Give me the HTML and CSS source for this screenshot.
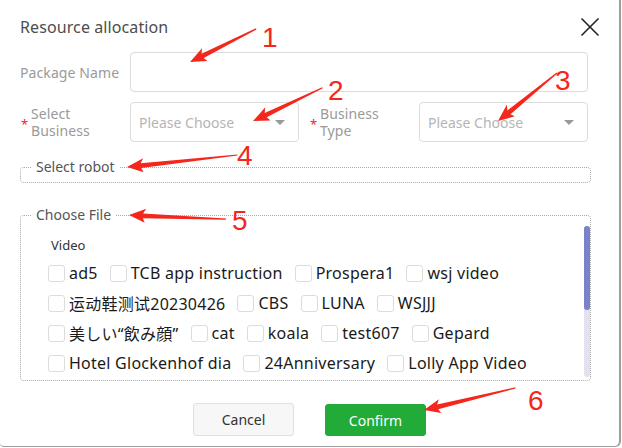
FILE: index.html
```html
<!DOCTYPE html>
<html lang="en">
<head>
  <meta charset="UTF-8" />
  <title>Resource allocation</title>
  <link rel="stylesheet" href="styles.css">
</head>
<body>
  <div class="dialog">
    <div class="dialog-header">
      <h2>Resource allocation</h2>
      <button class="close-btn" aria-label="close">
        <svg width="20" height="20" viewBox="0 0 20 20"><path d="M1.5 1.5 L18.5 18.5 M18.5 1.5 L1.5 18.5" stroke="#222" stroke-width="1.6" fill="none"/></svg>
      </button>
    </div>

    <div class="form-row">
      <label class="form-label">Package Name</label>
      <input class="text-input" type="text">
    </div>

    <div class="form-row">
      <label class="form-label required"><span>Select Business</span></label>
      <div class="select"><span>Please Choose</span><i class="caret"></i></div>
      <label class="form-label required second"><span>Business Type</span></label>
      <div class="select"><span>Please Choose</span><i class="caret"></i></div>
    </div>

    <fieldset class="robot-box">
      <legend>Select robot</legend>
    </fieldset>

    <fieldset class="file-box">
      <legend>Choose File</legend>
      <div class="file-list">
        <div class="file-group">
          <div class="group-title">Video</div>
          <div class="file-row">
            <label class="file-item"><input type="checkbox">ad5</label>
            <label class="file-item"><input type="checkbox">TCB app instruction</label>
            <label class="file-item"><input type="checkbox">Prospera1</label>
            <label class="file-item"><input type="checkbox">wsj video</label>
          </div>
          <div class="file-row">
            <label class="file-item"><input type="checkbox">运动鞋测试20230426</label>
            <label class="file-item"><input type="checkbox">CBS</label>
            <label class="file-item"><input type="checkbox">LUNA</label>
            <label class="file-item"><input type="checkbox">WSJJJ</label>
          </div>
          <div class="file-row">
            <label class="file-item"><input type="checkbox">美しい“飲み顔”</label>
            <label class="file-item"><input type="checkbox">cat</label>
            <label class="file-item"><input type="checkbox">koala</label>
            <label class="file-item"><input type="checkbox">test607</label>
            <label class="file-item"><input type="checkbox">Gepard</label>
          </div>
          <div class="file-row">
            <label class="file-item"><input type="checkbox">Hotel Glockenhof dia</label>
            <label class="file-item"><input type="checkbox">24Anniversary</label>
            <label class="file-item"><input type="checkbox">Lolly App Video</label>
          </div>
        </div>
        <div class="scrollbar"><div class="scrollbar-thumb"></div></div>
      </div>
    </fieldset>

    <div class="dialog-footer">
      <button class="btn btn-cancel">Cancel</button>
      <button class="btn btn-confirm">Confirm</button>
    </div>
  </div>

  <!-- annotation marks -->
  <svg class="marks" width="622" height="448" viewBox="0 0 622 448">
    <g fill="#f4271c">
      <polygon transform="translate(190,62) rotate(-26.6)" points="0,0 17,-7 14,-2.2 74,-0.6 74,0.6 14,2.6 16,7"/>
      <polygon transform="translate(253,121) rotate(-25.6)" points="0,0 17,-7 14,-2.2 77,-0.6 77,0.6 14,2.6 16,7"/>
      <polygon transform="translate(498,121) rotate(-39.1)" points="0,0 17,-7 14,-2.2 76,-0.6 76,0.6 14,2.6 16,7"/>
      <polygon transform="translate(127,167) rotate(-6.2)" points="0,0 17,-7 14,-2.2 111,-0.6 111,0.6 14,2.6 16,7"/>
      <polygon transform="translate(129,215) rotate(2.4)" points="0,0 17,-7 14,-2.2 97,-0.6 97,0.6 14,2.6 16,7"/>
      <polygon transform="translate(424,410) rotate(-13.6)" points="0,0 17,-7 14,-2.2 94,-0.6 94,0.6 14,2.6 16,7"/>
    </g>
    <g class="mark-num">
      <text x="262" y="47">1</text>
      <text x="328" y="100">2</text>
      <text x="555" y="90">3</text>
      <text x="237" y="165">4</text>
      <text x="232" y="230">5</text>
      <text x="528" y="410">6</text>
    </g>
  </svg>
</body>
</html>
```

FILE: styles.css
```css
body {
  margin: 0;
  background: #fff;
  font-family: "Noto Sans", "Noto Sans CJK SC", sans-serif;
  position: relative;
  width: 622px;
  height: 448px;
  overflow: hidden;
}

.dialog {
  width: 621px;
  height: 447px;
  box-sizing: border-box;
  padding: 14px 31px 0 20px;
  background: #fff;
  border-right: 2px solid #9c9c9c;
  border-bottom: 1px solid #9c9c9c;
  border-bottom-right-radius: 6px;
  border-bottom-left-radius: 4px;
}

.dialog-header {
  display: flex;
  justify-content: space-between;
  align-items: center;
  height: 26px;
}

.dialog-header h2 {
  margin: 0;
  font-size: 16px;
  font-weight: normal;
  color: #4d4d4d;
  line-height: 26px;
  letter-spacing: 0.1px;
}

.close-btn {
  background: none;
  border: none;
  padding: 0;
  margin-right: -12px;
  width: 20px;
  height: 20px;
}

.form-row {
  display: flex;
  align-items: center;
  margin-top: 12px;
}

.form-row + .form-row {
  margin-top: 10px;
}

.form-label {
  width: 110px;
  flex-shrink: 0;
  display: flex;
  align-items: center;
  font-size: 14px;
  line-height: 17px;
  color: #9a9a9a;
  letter-spacing: 0.1px;
}

.form-label span {
  width: 80px;
}

.form-label.required::before {
  content: "*";
  color: #f5222d;
  width: 11px;
  padding-left: 1px;
  box-sizing: border-box;
  font-size: 13px;
  margin-top: 4px;
}

.form-label.second {
  margin-left: 10px;
}

.text-input {
  flex: 1;
  height: 40px;
  box-sizing: border-box;
  border: 1px solid #dcdcdc;
  border-radius: 4px;
  outline: none;
}

.select {
  width: 170px;
  height: 40px;
  box-sizing: border-box;
  border: 1px solid #dcdcdc;
  border-radius: 4px;
  display: flex;
  align-items: center;
  justify-content: space-between;
  padding: 0 13px 0 8px;
  font-size: 14px;
  color: #b5b5b5;
}

.caret {
  width: 0;
  height: 0;
  border-left: 5px solid transparent;
  border-right: 5px solid transparent;
  border-top: 5px solid #999;
}

fieldset {
  margin: 0;
  padding: 0 0 0 11px;
  border: 1px dotted #a8a8a8;
  border-radius: 4px;
  width: 571px;
  box-sizing: border-box;
}

legend {
  padding: 0 4px;
  font-size: 14px;
  line-height: 20px;
  color: #555;
}

.robot-box {
  margin-top: 15px;
  padding-bottom: 5px;
}

.file-box {
  margin-top: 22px;
  padding-bottom: 1px;
}

.file-list {
  display: flex;
  height: 154px;
  overflow: hidden;
}

.file-group {
  flex: 1;
  padding: 10px 0 0 16px;
}

.scrollbar {
  width: 6px;
  margin: 1px 0 2px;
  background: #e1e2ee;
  border-radius: 3px;
}

.scrollbar-thumb {
  height: 84px;
  background: #7a82c8;
  border-radius: 3px;
}

.group-title {
  font-size: 13px;
  line-height: 20px;
  color: #333;
  padding-left: 3px;
  margin-bottom: 3px;
}

.file-row {
  display: flex;
  gap: 12px;
}

.file-item {
  display: flex;
  align-items: center;
  height: 30px;
  font-size: 16px;
  letter-spacing: 0.25px;
  color: #1a1a1a;
  white-space: nowrap;
}

input[type="checkbox"] {
  appearance: none;
  width: 17px;
  height: 17px;
  margin: 0 4px 0 0;
  border: 1px solid #dcdcdc;
  border-radius: 3px;
  background: #fff;
}

.dialog-footer {
  display: flex;
  justify-content: center;
  gap: 31px;
  margin-top: 22px;
  padding-left: 11px;
}

.btn {
  width: 101px;
  height: 33px;
  border-radius: 3px;
  font-family: inherit;
  font-size: 14px;
  cursor: pointer;
}

.btn-cancel {
  background: #f7f7f7;
  border: 1px solid #e0e0e0;
  color: #333;
}

.btn-confirm {
  background: #22ab38;
  border: 1px solid #22ab38;
  color: #fff;
  height: 32px;
  margin-top: 1px;
}

.marks {
  position: absolute;
  top: 0;
  left: 0;
  pointer-events: none;
}

.mark-num text {
  font-family: "Liberation Sans", sans-serif;
  font-size: 28px;
  fill: #f4271c;
}
```
